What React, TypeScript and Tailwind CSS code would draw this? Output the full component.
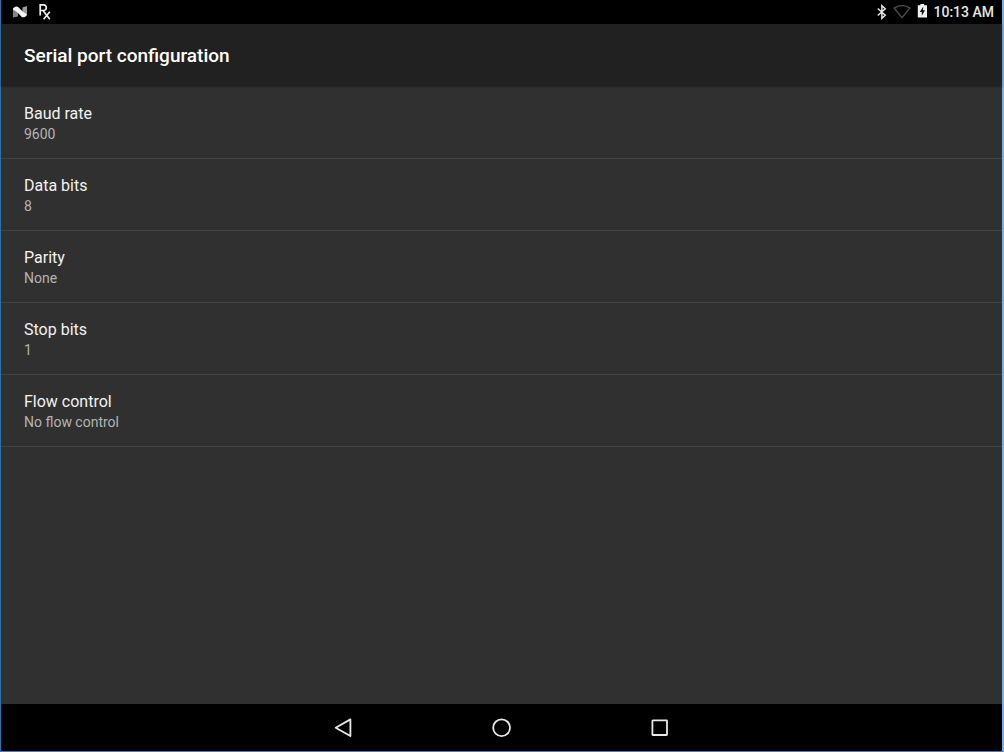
import React from "react";

type Setting = { title: string; value: string };

const settings: Setting[] = [
  { title: "Baud rate", value: "9600" },
  { title: "Data bits", value: "8" },
  { title: "Parity", value: "None" },
  { title: "Stop bits", value: "1" },
  { title: "Flow control", value: "No flow control" },
];

function StatusBar() {
  return (
    <div className="flex h-6 shrink-0 items-center justify-between bg-black pl-3 pr-2 text-[#e6e6e6]">
      <div className="flex items-center gap-3">
        <svg width="14" height="12" viewBox="0 0 14 12" aria-hidden="true">
          <path d="M0 2.5 5 1v9.5L0 11.5z" fill="#858585" />
          <path d="M9.4 1.5 14 0v9.5L9.4 11z" fill="#9c9c9c" />
          <path d="M0 2.4Q2.6-.4 5.4 1.2L10 5.8 14 8.4Q12 12.4 8.8 10.9L4.6 6.4 0 3.6z" fill="#f4f4f4" />
        </svg>
        <svg width="12" height="16" viewBox="0 0 12 16" fill="none" stroke="#ededed" strokeWidth="1.7" aria-hidden="true">
          <path d="M1.2 11.5V.9H4.5a2.8 2.8 0 0 1 0 5.6H1.2M4 6.5 10.8 15.2M10.8 7.8 4.6 15.2" />
        </svg>
      </div>
      <div className="flex items-center">
        <svg width="10" height="16" viewBox="0 0 10 16" fill="none" stroke="#e6e6e6" strokeWidth="1.5" aria-hidden="true">
          <path d="M.8 4.5 8.2 11.3 4.9 14.3V1.7L8.2 4.7 .8 11.5" />
        </svg>
        <svg className="ml-1.5" width="18" height="14" viewBox="0 0 18 14" fill="none" stroke="#4a4a4a" strokeWidth="1.4" aria-hidden="true">
          <path d="M1.2 3.2Q9-1.9 16.8 3.2L9 12.6z" />
        </svg>
        <svg className="ml-1.5" width="10" height="16" viewBox="0 0 10 16" aria-hidden="true">
          <path d="M3.4 0h3.8v1.2H10V13.6H.8V1.2H3.4z" fill="#f0f0f0" />
          <path d="M6.3 2.6 2.8 8h2v3.8L8 6.2H6z" fill="#111" />
        </svg>
        <time className="ml-1.5 text-sm font-medium leading-6">10:13 AM</time>
      </div>
    </div>
  );
}

function SettingRow({ title, value }: Setting) {
  return (
    <li>
      <button
        type="button"
        className="flex h-[72px] w-full flex-col justify-center border-b border-[#444444] px-[23px] pt-0.5 text-left"
      >
        <span className="text-base leading-5 text-[#f2f2f2]">{title}</span>
        <span className="text-sm leading-5 text-[#b4b4b4]">{value}</span>
      </button>
    </li>
  );
}

function NavigationBar() {
  return (
    <nav className="flex h-[47px] shrink-0 items-center justify-center gap-[138px] bg-black">
      <button type="button" aria-label="Back">
        <svg width="20" height="20" viewBox="0 0 20 20" fill="none" stroke="#e8e8e8" strokeWidth="1.8" strokeLinejoin="round">
          <path d="M16.4 1.4V18L1.7 9.7z" />
        </svg>
      </button>
      <button type="button" aria-label="Home">
        <svg width="20" height="20" viewBox="0 0 20 20" fill="none" stroke="#e8e8e8" strokeWidth="1.8">
          <circle cx="9.6" cy="9.7" r="8.4" />
        </svg>
      </button>
      <button type="button" aria-label="Recent apps">
        <svg width="20" height="20" viewBox="0 0 20 20" fill="none" stroke="#e8e8e8" strokeWidth="1.8">
          <rect x="2.4" y="2.4" width="14.6" height="14.6" rx=".4" />
        </svg>
      </button>
    </nav>
  );
}

export default function App() {
  return (
    <div className="flex min-h-screen flex-col border-b border-l border-r-2 border-b-[#5577ae] border-l-[#2f72a8] border-r-[#70b1e6] bg-[#303030] font-['Roboto',sans-serif]">
      <StatusBar />
      <header className="z-10 flex h-[62px] shrink-0 items-center bg-[#212121] px-[23px] pt-0.5 shadow-[0_1px_2px_rgba(0,0,0,0.3)]">
        <h1 className="text-[19px] font-medium leading-6 text-white">Serial port configuration</h1>
      </header>
      <main className="flex-1 pt-px">
        <ul>
          {settings.map((s) => (
            <SettingRow key={s.title} title={s.title} value={s.value} />
          ))}
        </ul>
      </main>
      <NavigationBar />
    </div>
  );
}
